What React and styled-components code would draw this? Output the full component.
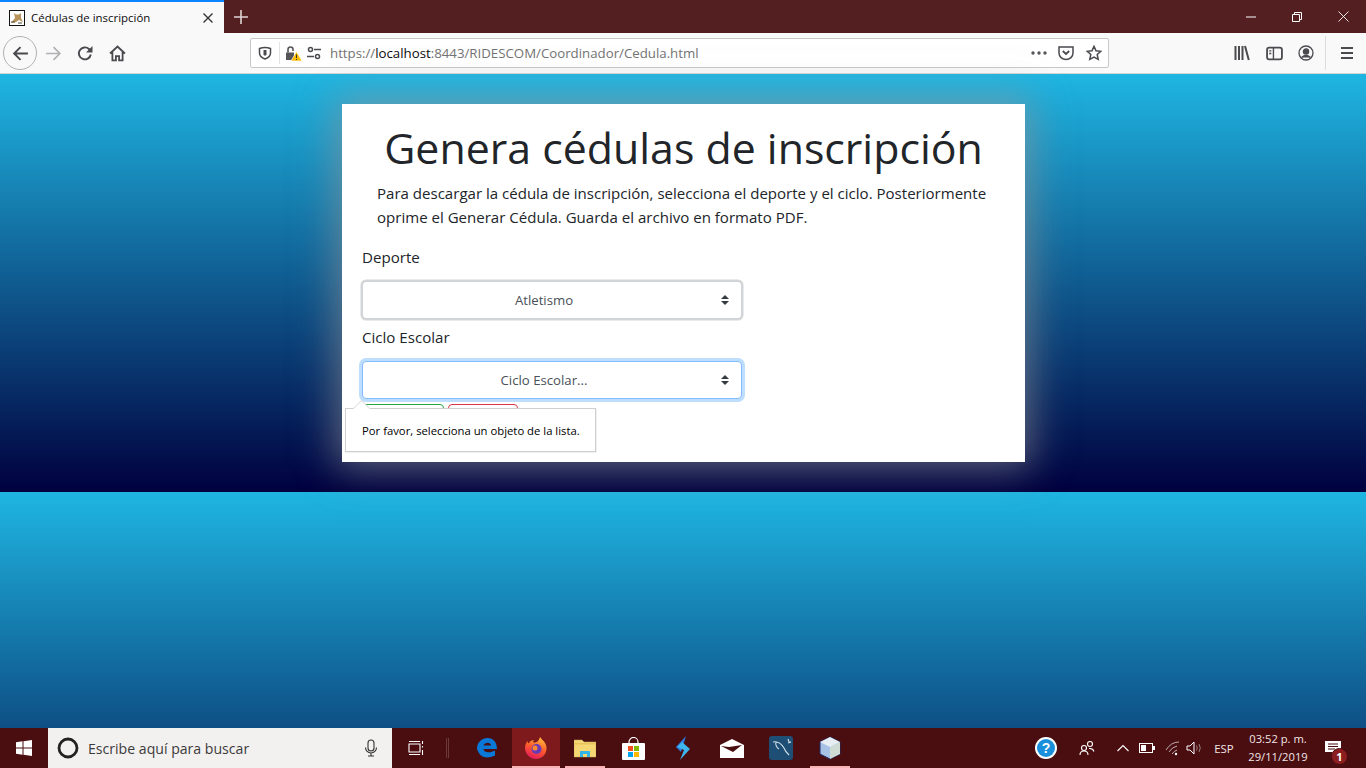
import React from "react"
import styled, { createGlobalStyle } from "styled-components"

const Global = createGlobalStyle`
  html, body { margin: 0; padding: 0; height: 100%; overflow: hidden; }
  body { font-family: "Open Sans", "Noto Sans", "Liberation Sans", sans-serif; }
  * { box-sizing: border-box; }
`

const Screen = styled.div`
  width: 1366px;
  height: 768px;
  display: flex;
  flex-direction: column;
  overflow: hidden;
`

/* ---- browser chrome ---- */
const TitleBar = styled.div`
  height: 33px;
  background: #541f20;
  display: flex;
  align-items: stretch;
`
const Tab = styled.div`
  width: 224px;
  background: #f9f9fa;
  border-top: 2px solid #0a84ff;
  display: flex;
  align-items: center;
  padding: 0 10px 0 9px;
  font-size: 11.45px;
  color: #0c0c0d;
`
const TabTitle = styled.span`
  flex: 1;
  margin-left: 6px;
  white-space: nowrap;
`
const NewTab = styled.div`
  width: 34px;
  display: flex;
  align-items: center;
  justify-content: center;
`
const Spacer = styled.div`
  flex: 1;
`
const WinBtn = styled.div`
  width: 46px;
  display: flex;
  align-items: center;
  justify-content: center;
`
const ToolBar = styled.div`
  height: 41px;
  background: #f9f9fa;
  border-bottom: 1px solid #d4d4d6;
  display: flex;
  align-items: center;
  color: #4a4a4f;
`
const NavSlot = styled.div`
  width: ${(p) => p.$w || 32}px;
  height: 34px;
  display: flex;
  align-items: center;
  justify-content: center;
  flex: none;
`
const BackRing = styled.div`
  width: 34px;
  height: 34px;
  border-radius: 50%;
  border: 1px solid #b1b1b3;
  display: flex;
  align-items: center;
  justify-content: center;
`
const UrlBar = styled.div`
  width: 859px;
  height: 30px;
  margin-left: 117px;
  background: #fff;
  border: 1px solid #c8c8ca;
  border-radius: 2px;
  display: flex;
  align-items: center;
  flex: none;
`
const UrlSep = styled.div`
  width: 1px;
  height: 22px;
  background: #e3e3e5;
`
const UrlText = styled.div`
  flex: 1;
  font-size: 13.25px;
  color: #737373;
  margin-left: 9px;
  white-space: nowrap;
  b { font-weight: 400; color: #0c0c0d; }
`
const ToolSep = styled.div`
  width: 1px;
  height: 34px;
  background: #dcdcde;
  margin: 0 5px 0 3px;
`

/* ---- page ---- */
const Page = styled.div`
  flex: 1;
  background: linear-gradient(#1fb6e2, #00003e) 0 0 / 100% 418px repeat-y;
`
const Hero = styled.div`
  height: 418px;
  padding-top: 30px;
`
const Card = styled.div`
  position: relative;
  width: 683px;
  height: 358px;
  margin-left: 342px;
  background: #fff;
  box-shadow: 0 0 36px 6px rgba(150, 150, 150, 0.62);
  padding: 0 20px;
  color: #212529;
`
const Heading = styled.h1`
  margin: 0;
  padding-top: 17px;
  font-size: 42.85px;
  line-height: 53px;
  font-weight: 400;
  text-align: center;
`
const Lead = styled.p`
  margin: 7px 0 0;
  padding: 0 0 0 15px;
  font-size: 15.05px;
  line-height: 24px;
  color: #212529;
`
const Label = styled.label`
  display: block;
  font-size: 15.1px;
  line-height: 24px;
  margin-bottom: ${(p) => p.$bottom}px;
  margin-top: ${(p) => p.$top}px;
`
const arrows =
  "url(\"data:image/svg+xml,%3csvg xmlns='http://www.w3.org/2000/svg' width='4' height='5' viewBox='0 0 4 5'%3e%3cpath fill='%23343a40' d='M2 0L0 2h4zm0 5L0 3h4z'/%3e%3c/svg%3e\")"
const Select = styled.select`
  display: block;
  width: 380px;
  height: 38px;
  appearance: none;
  background: #fff ${arrows} no-repeat right 12px center / 8px 10px;
  border: 1px solid ${(p) => (p.$focus ? "#80bdff" : "#d0d3d7")};
  border-radius: 4px;
  box-shadow: 0 0 0 ${(p) => (p.$focus ? "3px #bfdeff" : "1.5px #d4d5d8")};
  padding: 6px 28px 6px 12px;
  font-family: inherit;
  font-size: 13.2px;
  color: #495057;
  text-align-last: center;
  outline: none;
`
const Buttons = styled.div`
  display: flex;
  gap: 4px;
  margin-top: 5px;
`
const Btn = styled.button`
  width: ${(p) => p.$w}px;
  height: 38px;
  background: #fff;
  border: 1px solid ${(p) => p.$c};
  border-radius: 4px;
`
const Tooltip = styled.div`
  position: absolute;
  left: 3px;
  top: 304px;
  width: 251px;
  height: 44px;
  background: #fff;
  border: 1px solid #cfcfcf;
  box-shadow: 1px 1px 1px rgba(0, 0, 0, 0.06);
  padding-left: 16px;
  display: flex;
  align-items: center;
  font-size: 11.3px;
  color: #000;
  &::before {
    content: "";
    position: absolute;
    left: 8px;
    top: -8px;
    width: 14px;
    height: 14px;
    background: #fff;
    border-top: 1px solid #d8d8d8;
    border-left: 1px solid #d8d8d8;
    transform: rotate(45deg) scale(0.8);
  }
`

/* ---- taskbar ---- */
const TaskBar = styled.div`
  height: 40px;
  background: #4a0d10;
  display: flex;
  align-items: stretch;
  color: #fff;
`
const StartBtn = styled.div`
  width: 48px;
  display: flex;
  align-items: center;
  justify-content: center;
`
const SearchBox = styled.div`
  width: 344px;
  background: #f3f0f0;
  display: flex;
  align-items: center;
  padding: 0 12px 0 9px;
  font-size: 14.1px;
  color: #3b3b3b;
  span { flex: 1; margin-left: 9px; }
`
const TaskSlot = styled.div`
  width: ${(p) => p.$w || 48}px;
  flex: none;
  display: flex;
  align-items: center;
  justify-content: center;
  position: relative;
  padding-left: ${(p) => p.$pl || 0}px;
  background: ${(p) => (p.$active ? "#7e1a1c" : "transparent")};
  ${(p) =>
    p.$inset !== undefined &&
    `&::after {
      content: "";
      position: absolute;
      bottom: 0;
      left: ${p.$inset}px;
      right: ${p.$inset}px;
      height: 2px;
      background: #f8b4b4;
    }`}
`
const Clock = styled.div`
  width: 70px;
  margin-left: 4px;
  flex: none;
  font-size: 11.2px;
  line-height: 18px;
  text-align: center;
  color: #f0e6e6;
  align-self: center;
`
const Lang = styled.div`
  width: 30px;
  margin-left: 7px;
  font-size: 11.4px;
  text-align: center;
  align-self: center;
  color: #f0e6e6;
  flex: none;
`
const Badge = styled.div`
  position: absolute;
  right: 5px;
  bottom: 3px;
  width: 17px;
  height: 17px;
  border-radius: 50%;
  background: #8c1e20;
  border: 1px solid #4a0d10;
  font-size: 11px;
  font-weight: 700;
  line-height: 15px;
  text-align: center;
`

const Ico = ({ s = 16, vb, children, ...rest }) => (
  <svg width={s} height={s} viewBox={vb || "0 0 16 16"} fill="none" stroke="currentColor" strokeWidth="1.7" {...rest}>
    {children}
  </svg>
)

function TomcatFavicon() {
  return (
    <svg width="16" height="16" viewBox="0 0 16 16">
      <rect x="0.5" y="0.5" width="15" height="15" fill="#fff" stroke="#111" />
      <path d="M2 13 L6 8 L5 3 L7 4.5 L10 4.5 L12 3 L12 8 L14 12 L10 10 L7 12 Z" fill="#b8935a" />
      <path d="M2 12 L6 12 M9 13 L13 13" stroke="#4a4a3a" />
    </svg>
  )
}

export default function App() {
  return (
    <Screen>
      <Global />
      <TitleBar>
        <Tab>
          <TomcatFavicon />
          <TabTitle>Cédulas de inscripción</TabTitle>
          <Ico s={12} vb="0 0 12 12" style={{ color: "#333" }} strokeWidth="1.4">
            <path d="M1.5 1.5l9 9M10.5 1.5l-9 9" />
          </Ico>
        </Tab>
        <NewTab>
          <Ico s={14} vb="0 0 14 14" style={{ color: "#e0d4d4" }} strokeWidth="1.6">
            <path d="M7 0v14M0 7h14" />
          </Ico>
        </NewTab>
        <Spacer />
        <WinBtn>
          <Ico s={10} vb="0 0 10 10" style={{ color: "#fff" }} strokeWidth="1">
            <path d="M0 5h10" />
          </Ico>
        </WinBtn>
        <WinBtn>
          <Ico s={10} vb="0 0 10 10" style={{ color: "#fff" }} strokeWidth="1">
            <path d="M.5 2.5h7v7h-7zM2.5 2.5v-2h7v7h-2" />
          </Ico>
        </WinBtn>
        <WinBtn>
          <Ico s={11} vb="0 0 11 11" style={{ color: "#fff" }} strokeWidth="0.9">
            <path d="M.5.5l10 10M10.5.5l-10 10" />
          </Ico>
        </WinBtn>
      </TitleBar>

      <ToolBar>
        <NavSlot $w={3} />
        <BackRing>
          <Ico s={17} strokeWidth="1.8"><path d="M15 8H2M8 2L2 8l6 6" /></Ico>
        </BackRing>
        <NavSlot $w={32}>
          <Ico s={17} strokeWidth="1.6" style={{ color: "#b1b1b3" }}><path d="M1 8h13M8 2l6 6-6 6" /></Ico>
        </NavSlot>
        <NavSlot $w={32}>
          <Ico s={16} strokeWidth="1.9"><path d="M13.8 9.500A6 6 0 1 1 12 4l2 2" /><path d="M15.500 1v6.500H9z" fill="currentColor" stroke="none" /></Ico>
        </NavSlot>
        <NavSlot $w={32}>
          <Ico s={17} strokeWidth="1.7"><path d="M1 8l7-6.500L15 8M3.200 6.500V14.500h3.300v-4h3v4h3.300V6.500" /></Ico>
        </NavSlot>
        <UrlBar>
          <NavSlot $w={28}>
            <Ico s={14} vb="0 0 14 14" strokeWidth="1.500"><path d="M1.500 2.500Q7 .5 12.500 2.500V7q0 4-5.500 6Q1.500 11 1.500 7z" /><path d="M5.500 4h3v5l-1.500.8-1.500-.8z" fill="currentColor" stroke="none" /></Ico>
          </NavSlot>
          <UrlSep />
          <NavSlot $w={27}>
            <svg width="16" height="15" viewBox="0 0 16 15">
              <path d="M0 6.500h8V14H0z" fill="#55555a" />
              <path d="M2 6.500V3.500a2.500 2.500 0 0 1 5 0V5" fill="none" stroke="#55555a" strokeWidth="1.600" />
              <path d="M10.500 5.500l5.500 9.500H5z" fill="#ffbf00" stroke="#fff" strokeWidth=".6" />
              <path d="M10.500 8.500v3.500M10.500 13v1" stroke="#333" strokeWidth="1" />
            </svg>
          </NavSlot>
          <NavSlot $w={14}>
            <Ico s={14} vb="0 0 14 14" strokeWidth="1.500">
              <circle cx="3.500" cy="3.500" r="2" /><path d="M7 3.500h7M0 10.500h7" /><circle cx="10.500" cy="10.500" r="2" />
            </Ico>
          </NavSlot>
          <UrlText>https://<b>localhost</b>:8443/RIDESCOM/Coordinador/Cedula.html</UrlText>
          <NavSlot $w={26}>
            <svg width="16" height="4" viewBox="0 0 16 4" fill="#55555a"><circle cx="2" cy="2" r="1.700" /><circle cx="8" cy="2" r="1.700" /><circle cx="14" cy="2" r="1.700" /></svg>
          </NavSlot>
          <NavSlot $w={28}>
            <Ico s={16} strokeWidth="1.500"><path d="M1 2h14v6a7 6.500 0 0 1-14 0z" /><path d="M4.800 6l3.200 3 3.200-3" strokeWidth="1.800" /></Ico>
          </NavSlot>
          <NavSlot $w={28}>
            <Ico s={16} strokeWidth="1.500"><path d="M8 1.300l2 4.500 4.800.5-3.600 3.200 1 4.800L8 12l-4.200 2.300 1-4.800L1.200 6.300 6 5.800z" /></Ico>
          </NavSlot>
        </UrlBar>
        <Spacer />
        <NavSlot $w={32}>
          <Ico s={16} strokeWidth="2"><path d="M1.500 1v14M5 1v14M8.500 1v14M11 1l3.800 14" /></Ico>
        </NavSlot>
        <NavSlot $w={32}>
          <Ico s={17} strokeWidth="1.700"><rect x="1" y="2.500" width="14" height="11" rx="2" /><path d="M7 2.500v11M3 5.500h2M3 8h2" strokeWidth="1.300" /></Ico>
        </NavSlot>
        <NavSlot $w={32}>
          <Ico s={16} strokeWidth="1.300"><circle cx="8" cy="8" r="7" /><circle cx="8" cy="6.500" r="2.600" fill="currentColor" /><path d="M3.500 12.500q4.500-4 9 0" fill="currentColor" /></Ico>
        </NavSlot>
        <ToolSep />
        <NavSlot $w={32}>
          <Ico s={14} vb="0 0 14 14" strokeWidth="1.800"><path d="M1 2h12M1 7h12M1 12h12" /></Ico>
        </NavSlot>
        <NavSlot $w={3} />
      </ToolBar>

      <Page>
        <Hero>
          <Card>
            <Heading>Genera cédulas de inscripción</Heading>
            <Lead>
              Para descargar la cédula de inscripción, selecciona el deporte y el ciclo. Posteriormente
              oprime el Generar Cédula. Guarda el archivo en formato PDF.
            </Lead>
            <Label $top={16} $bottom={12}>Deporte</Label>
            <Select defaultValue="a"><option value="a">Atletismo</option></Select>
            <Label $top={6} $bottom={12}>Ciclo Escolar</Label>
            <Select $focus defaultValue="c"><option value="c">Ciclo Escolar...</option></Select>
            <Buttons>
              <Btn $w={82} $c="#28a745" />
              <Btn $w={70} $c="#dc3545" />
            </Buttons>
            <Tooltip>Por favor, selecciona un objeto de la lista.</Tooltip>
          </Card>
        </Hero>
      </Page>

      <TaskBar>
        <StartBtn>
          <svg width="16" height="16" viewBox="0 0 16 16" fill="#fff"><path d="M0 2.300l6.500-1v6.200H0zM7.500 1.200L16 0v7.500H7.500zM0 8.500h6.500v6.200l-6.500-1zM7.500 8.500H16V16l-8.500-1.200z" /></svg>
        </StartBtn>
        <SearchBox>
          <svg width="22" height="22" viewBox="0 0 22 22" fill="none" stroke="#222" strokeWidth="2.800"><circle cx="11" cy="11" r="9" /></svg>
          <span>Escribe aquí para buscar</span>
          <Ico s={18} vb="0 0 18 18" strokeWidth="1.100" style={{ color: "#333" }}><rect x="6" y="1" width="6" height="11" rx="3" /><path d="M3.500 8.500a5.500 5.500 0 0 0 11 0M9 14v3M6 17h6" /></Ico>
        </SearchBox>
        <TaskSlot $w={48}>
          <Ico s={16} strokeWidth="1.100" style={{ color: "#fff" }}><path d="M1 4h11v8H1zM1 1.500h11M1 14.500h11M14.500 1v3M14.500 6v1.500M14.500 10v5" /></Ico>
        </TaskSlot>
        <TaskSlot $w={14}>
          <svg width="3" height="20" viewBox="0 0 3 20" stroke="#6d3a3c"><path d="M.5 0v20M2.500 0v20" /></svg>
        </TaskSlot>
        <TaskSlot $w={58} $pl={8}>
          <svg width="22" height="22" viewBox="0 0 22 22">
            <path d="M1 12C1 5 6 1 11.500 1 17.500 1 21 5.500 21 12H7.500c.3 3.500 6 4.500 11.500 1.500v5c-6 3-12 2.500-15-1-1-1.200-2-3-3-5.500zM7.500 8.500h7.500C15 5 9 4.500 7.500 8.500z" fill="#0a78d7" />
          </svg>
        </TaskSlot>
        <TaskSlot $w={48} $active $inset={0}>
          <svg width="24" height="24" viewBox="0 0 24 24">
            <defs>
              <linearGradient id="fx" x1="0.700" y1="0" x2="0.300" y2="1">
                <stop offset="0" stopColor="#ffbd3a" />
                <stop offset=".5" stopColor="#ff5a2c" />
                <stop offset="1" stopColor="#e3175f" />
              </linearGradient>
            </defs>
            <path d="M16 1c2 3 6 5 6.500 10.500C23 18 18 23 12 23S1 18 1 12c0-3 1-5 2.500-7 0 1 .5 2 1 2.500C6 5 8 4 10 4c-1 1-1 2-.5 2.500 2 .5 5-.5 6.500-5.500z" fill="url(#fx)" />
            <circle cx="12.500" cy="13" r="5" fill="#6a3ab5" />
            <circle cx="11" cy="12" r="2.500" fill="#ff8a2c" />
          </svg>
        </TaskSlot>
        <TaskSlot $w={50} $inset={5}>
          <svg width="22" height="20" viewBox="0 0 22 20">
            <path d="M0 2h8l2 2h12v15H0z" fill="#f7d774" stroke="#caa95c" strokeWidth=".5" />
            <path d="M0 5h22v1.500H0z" fill="#e8c25b" />
            <path d="M6 19v-6h10v6h-3v-3H9v3z" fill="#35b4e8" />
          </svg>
        </TaskSlot>
        <TaskSlot $w={46}>
          <svg width="23" height="23" viewBox="0 0 23 23">
            <path d="M7 7V5a4.500 4.500 0 0 1 9 0v2" fill="none" stroke="#fff" strokeWidth="1.200" />
            <rect x="0" y="6" width="23" height="17" rx="1" fill="#fff" />
            <rect x="6" y="9" width="5" height="5" fill="#f25022" />
            <rect x="12" y="9" width="5" height="5" fill="#7fba00" />
            <rect x="6" y="15" width="5" height="5" fill="#00a4ef" />
            <rect x="12" y="15" width="5" height="5" fill="#ffb900" />
          </svg>
        </TaskSlot>
        <TaskSlot $w={54}>
          <svg width="14" height="24" viewBox="0 0 14 24">
            <path d="M10 0L0 11l5 5z" fill="#2b7de0" />
            <path d="M6 6l8 7-10 11 4-10-7-3z" fill="#3fb5ee" />
          </svg>
        </TaskSlot>
        <TaskSlot $w={44}>
          <svg width="24" height="19" viewBox="0 0 24 19">
            <path d="M0 6L12 0l12 6v13H0z" fill="#fff" />
            <path d="M1 7l12 6 9-7-13 2z" fill="#4a0d10" />
          </svg>
        </TaskSlot>
        <TaskSlot $w={54}>
          <svg width="24" height="24" viewBox="0 0 24 24">
            <rect width="24" height="24" rx="3" fill="#1f4e74" />
            <path d="M4 6c4-1 8 1 11 6 1 3 3 5 5 7M7 6c-1 3 1 6 3 7M19 3l1 3 2 0-3 1" fill="none" stroke="#cfe0ea" strokeWidth="1.100" />
          </svg>
        </TaskSlot>
        <TaskSlot $w={44} $inset={2}>
          <svg width="24" height="24" viewBox="0 0 24 24">
            <path d="M12 1l10 5v12l-10 5-10-5V6z" fill="#a8c2e6" stroke="#1f2c66" strokeWidth="1" />
            <path d="M12 1l10 5-10 5L2 6z" fill="#e6eef4" />
            <path d="M12 11l10-5v12l-10 5z" fill="#cfdcd6" />
          </svg>
        </TaskSlot>
        <Spacer />
        <TaskSlot $w={34}>
          <svg width="24" height="24" viewBox="0 0 24 24">
            <circle cx="12" cy="12" r="11" fill="#fff" />
            <circle cx="12" cy="12" r="9" fill="#1a8fdc" />
            <text x="12" y="17" textAnchor="middle" fontSize="14" fontWeight="700" fill="#fff" fontFamily="Liberation Sans, sans-serif">?</text>
          </svg>
        </TaskSlot>
        <TaskSlot $w={48}>
          <Ico s={16} strokeWidth="1.100" style={{ color: "#fff" }}><circle cx="11" cy="4" r="2.500" /><circle cx="5" cy="8" r="2.500" /><path d="M1 15q0-4 4-4t4 4M10 8.500q4-.5 5 3" /></Ico>
        </TaskSlot>
        <TaskSlot $w={24}>
          <Ico s={12} vb="0 0 12 12" strokeWidth="1.100" style={{ color: "#fff" }}><path d="M.5 9l5.500-5.500L11.500 9" /></Ico>
        </TaskSlot>
        <TaskSlot $w={24}>
          <svg width="16" height="10" viewBox="0 0 16 10"><rect x=".5" y=".5" width="13" height="9" fill="none" stroke="#fff" /><rect x="2" y="2" width="5" height="6" fill="#fff" /><rect x="14" y="3" width="2" height="4" fill="#fff" /></svg>
        </TaskSlot>
        <TaskSlot $w={27}>
          <Ico s={16} strokeWidth="1" style={{ color: "#bfb0b0" }}><path d="M1 10Q6 2 14 2M4 12q3-5 8-6M7 14q2-3 5-4" /><circle cx="11" cy="14" r="1.200" fill="#fff" stroke="none" /></Ico>
        </TaskSlot>
        <TaskSlot $w={16}>
          <svg width="16" height="16" viewBox="0 0 16 16" fill="none" stroke="#fff"><path d="M1 6h3l4-4v12l-4-4H1z" /><path d="M10.500 5.500q1.500 2.500 0 5M13 4q2.500 4 0 8" stroke="#9a8080" /></svg>
        </TaskSlot>
        <Lang>ESP</Lang>
        <Clock>03:52 p. m.<br />29/11/2019</Clock>
        <TaskSlot $w={40}>
          <svg width="16" height="15" viewBox="0 0 16 15"><path d="M0 0h16v11h-6l-3 3v-3H0z" fill="#fff" /><path d="M3 3h10M3 5.500h10M3 8h7" stroke="#4a0d10" /></svg>
          <Badge>1</Badge>
        </TaskSlot>
        <TaskSlot $w={13} />
      </TaskBar>
    </Screen>
  )
}
